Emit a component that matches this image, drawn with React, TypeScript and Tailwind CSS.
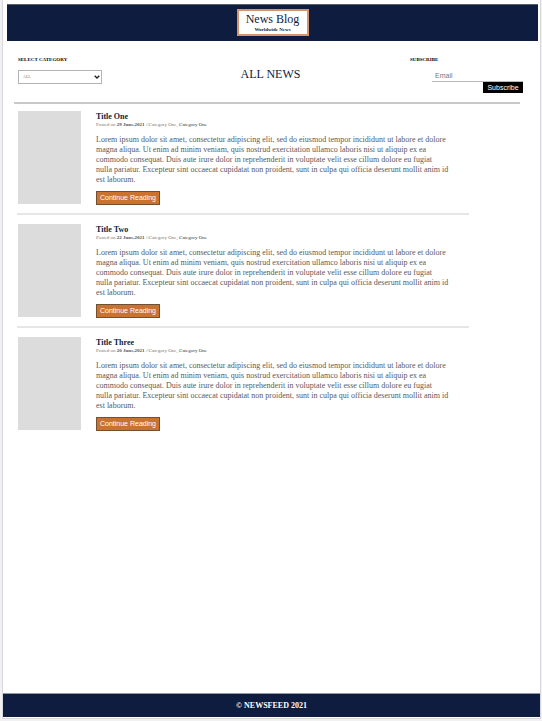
const posts = [
  { title: "Title One", date: "29 June,2021" },
  { title: "Title Two", date: "22 June,2021" },
  { title: "Title Three", date: "20 June,2021" },
];

const excerpt =
  "Lorem ipsum dolor sit amet, consectetur adipiscing elit, sed do eiusmod tempor incididunt ut labore et dolore magna aliqua. Ut enim ad minim veniam, quis nostrud exercitation ullamco laboris nisi ut aliquip ex ea commodo consequat. Duis aute irure dolor in reprehenderit in voluptate velit esse cillum dolore eu fugiat nulla pariatur. Excepteur sint occaecat cupidatat non proident, sunt in culpa qui officia deserunt mollit anim id est laborum.";

function Header() {
  return (
    <header className="mt-1 mr-0.5 ml-1 flex justify-center border-t border-[#56606c] bg-[#0e1c40] pt-1 pb-[5px]">
      <a href="#" className="flex h-[27px] w-[72px] flex-col items-center border-2 border-[#d4946c] bg-white pt-px text-[#0e1c40]">
        <span className="text-[12px] leading-[15px]">News Blog</span>
        <span className="text-[5px] leading-[6px] font-bold">Worldwide News</span>
      </a>
    </header>
  );
}

function Toolbar() {
  return (
    <section className="mr-[17px] ml-[15px] grid grid-cols-[1fr_auto_1fr] pt-4">
      <div className="flex flex-col items-start">
        <label htmlFor="category" className="text-[5px] leading-[6px] font-bold text-black">
          SELECT CATEGORY
        </label>
        <div className="relative mt-[7px] w-[84px]">
          <select
            id="category"
            className="block h-[14px] w-full appearance-none border border-[#b4b4b4] bg-white pl-1 text-[4px] text-[#777777]"
          >
            <option>ALL</option>
          </select>
          <svg viewBox="0 0 6 4" className="pointer-events-none absolute top-[5px] right-[2px] h-1 w-1.5" fill="none" stroke="#222222" strokeWidth="1.4">
            <path d="M.7 .7 3 3 5.3 .7" />
          </svg>
        </div>
      </div>
      <h1 className="pt-[9px] text-[12px] leading-4 text-[#0e1c40]">ALL NEWS</h1>
      <form className="ml-auto flex w-[113px] flex-col" onSubmit={(e) => e.preventDefault()}>
        <label htmlFor="email" className="text-[5px] leading-[6px] font-bold text-black">
          SUBSCRIBE
        </label>
        <input
          id="email"
          type="email"
          placeholder="Email"
          className="mt-[7px] ml-[22px] h-3 border-b border-[#b8b8b8] bg-transparent px-[3px] font-['Liberation_Sans',Arial,sans-serif] text-[7px] outline-none placeholder:text-[#777777]"
        />
        <button
          type="submit"
          className="h-[11px] w-10 self-end bg-black font-['Liberation_Sans',Arial,sans-serif] text-[7px] leading-[11px] text-white"
        >
          Subscribe
        </button>
      </form>
    </section>
  );
}

function Post({ title, date }: { title: string; date: string }) {
  return (
    <article className="flex gap-[15px] border-b-2 border-[#e6e6e6] pt-[9px] pb-2 first:pt-[7px] last:border-b-0">
      <div className="mb-px ml-px w-[63px] shrink-0 bg-[#dcdcdc]" />
      <div className="flex min-w-0 flex-col items-start">
        <h2 className="pt-px text-[8px] leading-[10px] font-bold text-[#0e1c40]">{title}</h2>
        <p className="text-[5px] leading-[6px] text-[#777777]">
          Posted on <b className="text-[#555555]">{date}</b> //Category One, <span className="text-[#333333]">Category One</span>
        </p>
        <p className="mt-[7px] pr-5 text-[8px] leading-[10px] text-[#5a5a5a]">{excerpt}</p>
        <button
          type="button"
          className="mt-1.5 h-[14px] w-16 border border-[#75502f] bg-[#ca7230] font-['Liberation_Sans',Arial,sans-serif] text-[7px] leading-3 text-white"
        >
          Continue Reading
        </button>
      </div>
    </article>
  );
}

export default function App() {
  return (
    <div className="flex min-h-screen flex-col bg-[#f1f1f3] pr-px pb-[2px] pl-[2px] font-['Liberation_Serif','Times_New_Roman',serif]">
      <div className="flex grow flex-col border-r border-b border-l border-[#d8d8dc] bg-white pb-px">
        <Header />
        <Toolbar />
        <main className="mt-[9px] mr-5 ml-[11px] grow border-t-2 border-[#c9c9c9]">
          <div className="mr-[51px] ml-[3px]">
            {posts.map((post) => (
              <Post key={post.title} {...post} />
            ))}
          </div>
        </main>
        <footer className="border-t border-[#8d9aa6] bg-[#0e1c40] pt-px text-center text-[8px] leading-[22px] font-bold text-white">
          © NEWSFEED 2021
        </footer>
      </div>
    </div>
  );
}
